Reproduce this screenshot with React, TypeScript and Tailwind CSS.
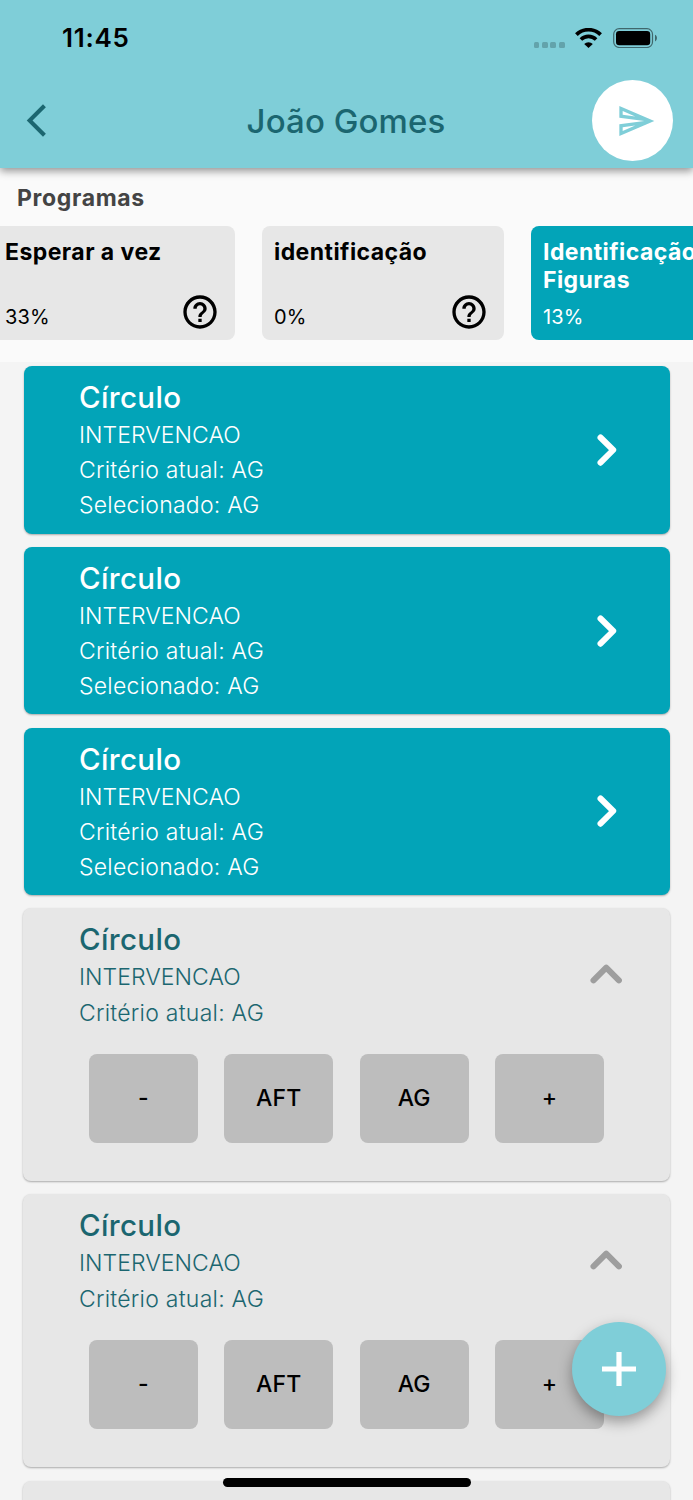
import React from 'react';
import { MdArrowBackIosNew, MdHelpOutline } from 'react-icons/md';

interface Program {
  title: string;
  progress: string;
  active?: boolean;
}

interface Target {
  title: string;
  phase: string;
  criterion: string;
  selected?: string;
}

const programs: Program[] = [
  { title: 'Esperar a vez', progress: '33%' },
  { title: 'identificação', progress: '0%' },
  { title: 'Identificação Figuras', progress: '13%', active: true },
];

const targets: Target[] = [
  { title: 'Círculo', phase: 'INTERVENCAO', criterion: 'AG', selected: 'AG' },
  { title: 'Círculo', phase: 'INTERVENCAO', criterion: 'AG', selected: 'AG' },
  { title: 'Círculo', phase: 'INTERVENCAO', criterion: 'AG', selected: 'AG' },
  { title: 'Círculo', phase: 'INTERVENCAO', criterion: 'AG' },
  { title: 'Círculo', phase: 'INTERVENCAO', criterion: 'AG' },
  { title: 'Círculo', phase: 'INTERVENCAO', criterion: 'AG' },
];

const answers = ['-', 'AFT', 'AG', '+'];

const StatusBar = () => (
  <div className="flex h-[76px] items-center justify-between pl-[62px] pr-[35.5px]">
    <span className="text-[26px] font-semibold leading-none tracking-[0.75px] text-black">11:45</span>
    <div className="flex items-center">
      <div className="mt-[14px] flex gap-[2.7px]">
        {[0, 1, 2, 3].map((dot) => (
          <span key={dot} className="size-[5.7px] rounded-[1.5px] bg-[#63a3ab]" />
        ))}
      </div>
      <svg className="ml-[10.5px]" width="27" height="20" viewBox="0 0 27 20" fill="none" stroke="#000">
        <path d="M1.4 6.7a17.2 17.2 0 0 1 24.2 0" strokeWidth="3.8" />
        <path d="M5.9 11.5a10.8 10.8 0 0 1 15.2 0" strokeWidth="3.6" />
        <path d="M9.2 15.9a6.1 6.1 0 0 1 8.6 0L13.5 20z" fill="#000" stroke="none" />
      </svg>
      <svg className="ml-[10.5px]" width="45" height="20" viewBox="0 0 45 20">
        <rect x="0.7" y="0.7" width="38.8" height="18.8" rx="5.5" fill="none" stroke="#000" strokeOpacity="0.5" strokeWidth="1.2" />
        <rect x="3" y="3" width="34.2" height="14.2" rx="3.2" fill="#000" />
        <path d="M42 6.8c2.6 1 2.6 5.6 0 6.6z" fill="#000" fillOpacity="0.5" />
      </svg>
    </div>
  </div>
);

const Header = () => (
  <header className="relative z-10 h-[167.5px] shrink-0 bg-[#7fced8] shadow-[0_3px_8px_rgba(0,0,0,0.42)]">
    <StatusBar />
    <div className="flex h-[89.5px] items-center justify-between pl-[17px] pr-5">
      <button className="w-[81px]">
        <MdArrowBackIosNew size={39} className="text-[#1b6670]" />
      </button>
      <h1 className="pl-[2px] pt-[2px] text-[33px] font-medium tracking-[0.1px] text-[#1b6670]">João Gomes</h1>
      <button className="flex size-[81px] items-center justify-center rounded-full bg-white">
        <svg className="ml-[6px]" width="40" height="40" viewBox="0 0 24 24" fill="#7fced8">
          <path d="M4.01 6.03l7.51 3.22-7.52-1 .01-2.22m7.5 8.72L4 17.97v-2.22l7.51-1M2.01 3L2 10l15 2-15 2 .01 7L23 12 2.01 3z" />
        </svg>
      </button>
    </div>
  </header>
);

const ProgramCard: React.FC<{ program: Program }> = ({ program }) => (
  <div
    className={`flex h-[114px] w-[242.3px] shrink-0 flex-col justify-between rounded-lg pl-3 pt-3 ${
      program.active ? 'bg-[#02a4b8] text-white' : 'bg-[#e7e7e7] text-black'
    }`}
  >
    <h3 className="text-[23px] font-bold leading-[28.4px] tracking-[0.45px]">{program.title}</h3>
    <div className="flex items-end justify-between pb-2 pr-[15px]">
      <span className="pb-[2.5px] text-[20px] leading-[26px] tracking-[0.15px]">{program.progress}</span>
      {!program.active && <MdHelpOutline size={40} />}
    </div>
  </div>
);

const TargetCard: React.FC<{ target: Target }> = ({ target }) => {
  const done = Boolean(target.selected);

  return (
    <div
      className={`shrink-0 rounded-lg pt-[11px] shadow-[0_1px_2px_rgba(0,0,0,0.3)] ${
        done ? 'mx-[0.5px] h-[167.5px] bg-[#02a4b8] px-[55.5px] text-white' : 'h-[272.8px] bg-[#e7e7e7] px-14 text-[#1b6670]'
      }`}
    >
      <div className="flex items-center justify-between">
        <div className="text-[23px] font-light leading-[35.2px] tracking-[0.25px]">
          <h2 className="pb-px text-[29.5px] font-medium leading-[40px] tracking-[0.35px]">{target.title}</h2>
          <p className="tracking-[0.05px]">{target.phase}</p>
          <p>Critério atual: {target.criterion}</p>
          {done && <p>Selecionado: {target.selected}</p>}
        </div>
        <svg
          className={done ? '-mr-3 mt-[-1px]' : '-mr-3 mt-[-3px] text-[#9e9e9e]'}
          width="40"
          height="40"
          viewBox="0 0 40 40"
          fill="none"
          stroke="currentColor"
          strokeWidth="6"
          strokeLinecap="round"
          strokeLinejoin="round"
        >
          <path d={done ? 'M14.5 7.5 27.2 20 14.5 32.7' : 'M7.5 26.3 20.2 13.7 32.9 26.3'} />
        </svg>
      </div>
      {!done && (
        <div className="-mx-14 mt-[23.5px] flex justify-center gap-[26.6px]">
          {answers.map((answer) => (
            <button
              key={answer}
              className="h-[88.8px] w-[108.8px] rounded-lg bg-[#bdbdbd] pb-px text-[23px] font-[450] tracking-[0.2px] text-black"
            >
              {answer}
            </button>
          ))}
        </div>
      )}
    </div>
  );
};

export default function App() {
  return (
    <div className="relative flex h-[1500px] w-[693px] flex-col overflow-hidden bg-[#f4f4f4] font-['Inter',sans-serif]">
      <Header />

      {/* Programs carousel, scrolled so the first card runs off the left edge */}
      <section className="h-[194px] shrink-0 overflow-hidden bg-[#fafafa] pt-[16.5px]">
        <h2 className="pl-[17px] text-[23px] font-bold leading-[29px] tracking-[0.65px] text-[#444]">Programas</h2>
        <div className="-ml-[7px] mt-[13px] flex gap-[26.7px]">
          {programs.map((program) => (
            <ProgramCard key={program.title} program={program} />
          ))}
        </div>
      </section>

      <main className="flex flex-col gap-[13.3px] px-[23px] pt-[4.5px]">
        {targets.map((target, index) => (
          <TargetCard key={index} target={target} />
        ))}
      </main>

      {/* Add button */}
      <button className="absolute bottom-[84px] right-[27px] flex size-[94px] items-center justify-center rounded-full bg-[#7fced8] shadow-[0_6px_14px_rgba(0,0,0,0.35)]">
        <svg width="34" height="34" viewBox="0 0 34 34" stroke="#fff" strokeWidth="5.2">
          <path d="M17 0v34M0 17h34" />
        </svg>
      </button>

      {/* Home indicator */}
      <div className="absolute bottom-[13.5px] left-[222.5px] h-[8.5px] w-[248px] rounded-full bg-black" />
    </div>
  );
}
